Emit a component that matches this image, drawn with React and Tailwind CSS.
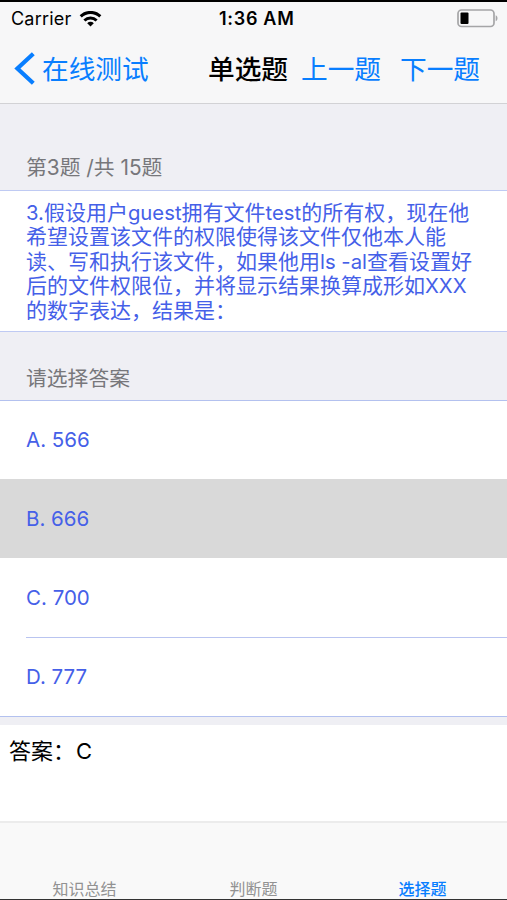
const QUESTION = [
  '3.假设用户guest拥有文件test的所有权，现在他',
  '希望设置该文件的权限使得该文件仅他本人能',
  '读、写和执行该文件，如果他用ls -al查看设置好',
  '后的文件权限位，并将显示结果换算成形如XXX',
  '的数字表达，结果是：',
];

// Latin runs are set slightly smaller than the Chinese text around them.
function MixedText({ text }) {
  return text.split(/([\x20-\x7e]+)/).map((part, i) =>
    i % 2 ? (
      <span key={i} className="text-[20.3px]">{part}</span>
    ) : (
      part
    ),
  );
}

function StatusBar() {
  return (
    <div className="relative flex h-[33px] items-center justify-between pl-[11px] pr-[8px] text-black">
      <div className="flex items-center gap-[8px]">
        <span className="text-[18px] leading-none tracking-[0.2px]">Carrier</span>
        <svg width="23" height="16" viewBox="0 0 22 16" fill="none" stroke="#000" strokeWidth="3">
          <path d="M1.2 5.4a14 14 0 0 1 19.6 0" />
          <path d="M4.9 9.5a8.8 8.8 0 0 1 12.2 0" />
          <path d="M11 15.6l-3.3-3.4a4.7 4.7 0 0 1 6.6 0z" fill="#000" stroke="none" />
        </svg>
      </div>
      <span className="absolute left-[219px] text-[18px] font-semibold leading-none tracking-[0.7px]">1:36 AM</span>
      <svg width="42" height="19" viewBox="0 0 42 19">
        <rect x="1" y="1" width="36" height="16.5" rx="3.5" fill="none" stroke="#a5a5a7" strokeWidth="1.7" />
        <rect x="3.5" y="3.5" width="8" height="11.5" rx="1" fill="#000" />
        <path d="M38.7 6.2c2.4 1.2 2.4 4.8 0 6z" fill="#a5a5a7" />
      </svg>
    </div>
  );
}

function NavBar() {
  return (
    <div className="flex h-[67px] items-center pl-[14px] text-[26.7px] leading-none text-[#087eff]">
      <svg width="21" height="34" viewBox="0 0 21 34" fill="none" stroke="#087eff" strokeWidth="4.2">
        <path d="M19.3 1.8L3.4 16.5 19.3 31.2" />
      </svg>
      <span className="ml-[7px] w-[166px] pt-[2px]">在线测试</span>
      <span className="w-[93px] pt-[2px] font-medium text-black">单选题</span>
      <span className="w-[99px] pt-[2px]">上一题</span>
      <span className="pt-[2px]">下一题</span>
    </div>
  );
}

function Option({ children, className }) {
  return (
    <li className={`flex items-center pl-[26px] text-[20.5px] leading-none text-[#4560e8] ${className}`}>
      {children}
    </li>
  );
}

export default function App() {
  return (
    <div className="flex h-[900px] w-[507px] flex-col overflow-hidden whitespace-nowrap border-b border-t-2 border-b-[#333] border-t-black bg-[#efeff4] font-['Inter','Noto_Sans_CJK_SC',sans-serif]">
      <header className="h-[102px] shrink-0 border-b border-[#d2d2d5] bg-[#f7f7f8]">
        <StatusBar />
        <NavBar />
      </header>

      <h2 className="flex h-[86px] shrink-0 items-end pb-[11px] pl-[26px] text-[20.8px] leading-none text-[#77777b]">
        第3题 /共 15题
      </h2>
      <section className="h-[142px] shrink-0 border-y border-[#bfcaf3] bg-white pl-[26px] pt-[10px] text-[21px] leading-[24.4px] text-[#4560e8]">
        {QUESTION.map((line) => (
          <p key={line} className="h-[24.4px]">
            <MixedText text={line} />
          </p>
        ))}
      </section>

      <h2 className="flex h-[68px] shrink-0 items-end pb-[10px] pl-[26px] text-[20.8px] leading-none text-[#77777b]">
        请选择答案
      </h2>
      <ul className="shrink-0 border-y border-[#b3c1ef] bg-white">
        <Option className="h-[78px]">A. 566</Option>
        <Option className="h-[79px] bg-[#d9d9d9] pt-[2px]">B. 666</Option>
        <Option className="h-[79px] pt-[2px]">C. 700</Option>
        <li className="ml-[26px] h-px bg-[#b9c4f0]" />
        <Option className="h-[78px] pt-px">D. 777</Option>
      </ul>

      <section className="mt-[8px] h-[96px] shrink-0 bg-white pl-[9px] pt-[14px] text-[22px] leading-[24px] text-black">
        答案：<span className="ml-px">C</span>
      </section>

      <nav className="flex grow items-end border-t-2 border-[#ececec] bg-[#f9f9f9] pb-[2px] text-[16px] leading-none text-[#929292]">
        <span className="flex-1 text-center">知识总结</span>
        <span className="flex-1 text-center">判断题</span>
        <span className="flex-1 text-center font-medium text-[#087eff]">选择题</span>
      </nav>
    </div>
  );
}
